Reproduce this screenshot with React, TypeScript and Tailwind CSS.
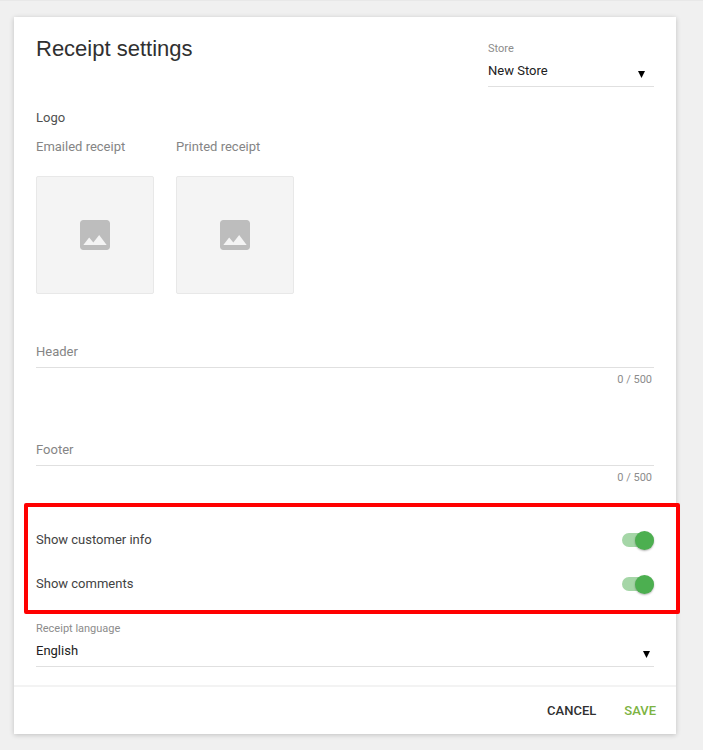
import React, { useState } from 'react';

type SelectFieldProps = {
    id: string;
    label: string;
    options: string[];
    arrowClass: string;
};

const SelectField: React.FC<SelectFieldProps> = ({ id, label, options, arrowClass }) => (
    <div className="flex flex-col">
        <label htmlFor={id} className="text-[11px] leading-4 text-[#8c8c8c]">{label}</label>
        <div className="relative">
            <select
                id={id}
                className="block w-full h-[30px] appearance-none border-b border-[#e0e0e0] bg-transparent pb-0.5 text-[13px] text-[#212121] outline-none"
            >
                {options.map((option) => (
                    <option key={option}>{option}</option>
                ))}
            </select>
            <svg viewBox="0 0 7 7" className={`absolute top-[14px] size-[7px] pointer-events-none ${arrowClass}`}>
                <path d="M0 0h7L3.5 7z" fill="#000" />
            </svg>
        </div>
    </div>
);

const LogoUpload: React.FC<{ label: string }> = ({ label }) => (
    <div className="w-[118px]">
        <p className="text-[13px] leading-5 text-[#858585]">{label}</p>
        <button
            type="button"
            aria-label={label}
            className="mt-[19px] flex w-full h-[118px] items-center justify-center rounded-xs border border-[#e8e8e8] bg-[#f4f4f4]"
        >
            <svg viewBox="3 3 18 18" className="w-[30px] h-[30px]" fill="#bdbdbd">
                <path d="M21 19V5c0-1.1-.9-2-2-2H5c-1.1 0-2 .9-2 2v14c0 1.1.9 2 2 2h14c1.1 0 2-.9 2-2zM8.5 13.5l2.5 3.01L14.5 12l4.5 6H5l3.5-4.5z" />
            </svg>
        </button>
    </div>
);

const TextField: React.FC<{ label: string }> = ({ label }) => {
    const [value, setValue] = useState('');

    return (
        <div>
            <input
                type="text"
                aria-label={label}
                placeholder={label}
                maxLength={500}
                value={value}
                onChange={(e) => setValue(e.target.value)}
                className="block w-full h-8 border-b border-[#e0e0e0] text-[13px] text-[#212121] placeholder:text-[#858585] outline-none"
            />
            <p className="mt-0.5 pr-0.5 text-right text-[11px] leading-5 text-[#8c8c8c]">{value.length} / 500</p>
        </div>
    );
};

const Toggle: React.FC<{ id: string; label: string }> = ({ id, label }) => (
    <div className="flex h-11 items-center justify-between">
        <label htmlFor={id} className="text-[13px] text-[#424242]">{label}</label>
        <input
            id={id}
            type="checkbox"
            role="switch"
            defaultChecked
            className="flex w-8 h-[14px] appearance-none items-center rounded-full bg-[#bdbdbd] checked:justify-end checked:bg-[#a5d6a7] before:block before:size-[19px] before:shrink-0 before:rounded-full before:bg-white before:shadow-[0_1px_2px_rgba(0,0,0,0.3)] before:content-[''] checked:before:bg-[#4caf50]"
        />
    </div>
);

const App: React.FC = () => {
    return (
        <main className="min-h-screen border-t border-[#e8e8e8] bg-[#f0f0f0] pt-4 pr-[27px] pb-4 pl-[14px] font-['Roboto',sans-serif]">
            <form className="bg-white shadow-[0_1px_5px_rgba(0,0,0,0.2)]" onSubmit={(e) => e.preventDefault()}>
                <div className="px-[22px] pt-6 pb-[18px]">
                    <div className="flex items-start justify-between">
                        <h1 className="font-['Liberation_Sans',sans-serif] text-[22px] leading-4 text-[#303030]">Receipt settings</h1>
                        <div className="w-[166px]">
                            <SelectField id="store" label="Store" options={['New Store']} arrowClass="right-[9px]" />
                        </div>
                    </div>

                    <h2 className="mt-[21px] text-[13px] leading-5 text-[#505050]">Logo</h2>
                    <div className="mt-[9px] flex gap-[22px]">
                        <LogoUpload label="Emailed receipt" />
                        <LogoUpload label="Printed receipt" />
                    </div>

                    <div className="mt-[42px] flex flex-col gap-11">
                        <TextField label="Header" />
                        <TextField label="Footer" />
                    </div>

                    <div className="relative mt-[30px] mb-[15px]">
                        <Toggle id="customer-info" label="Show customer info" />
                        <Toggle id="comments" label="Show comments" />
                        {/* Highlight frame around the two switches */}
                        <div className="absolute -top-[15px] -right-[26px] -bottom-2 -left-3 rounded-xs border-4 border-[#ff0000] pointer-events-none" />
                    </div>

                    <SelectField id="language" label="Receipt language" options={['English']} arrowClass="right-1" />
                </div>

                <div className="flex h-[49px] items-center justify-end gap-7 border-t-2 border-[#f3f3f3] pr-5">
                    <button type="button" className="text-[13px] font-medium text-[#303030]">CANCEL</button>
                    <button type="submit" className="text-[13px] font-medium text-[#7cb342]">SAVE</button>
                </div>
            </form>
        </main>
    );
};

export default App;
